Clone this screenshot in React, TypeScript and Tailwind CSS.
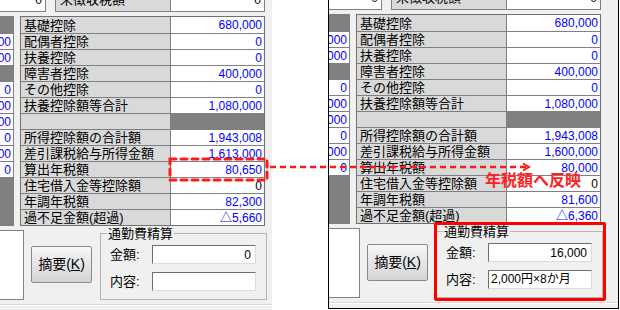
import React from "react";

type SheetData = {
  values: string[];
  amount: string;
  memo: string;
};

const LABELS = [
  "基礎控除",
  "配偶者控除",
  "扶養控除",
  "障害者控除",
  "その他控除",
  "扶養控除額等合計",
  "",
  "所得控除額の合計額",
  "差引課税給与所得金額",
  "算出年税額",
  "住宅借入金等控除額",
  "年調年税額",
  "過不足金額(超過)",
];

// left neighbour column, only its right edge is on screen
const SIDE = ["", "380,000", "380,000", "", "0", "1,030,000", "1,100,000", "0", "270,000", "0"];

const BEFORE: SheetData = {
  values: ["680,000", "0", "0", "400,000", "0", "1,080,000", "", "1,943,008", "1,613,000", "80,650", "0", "82,300", "△5,660"],
  amount: "0",
  memo: "",
};

const AFTER: SheetData = {
  values: ["680,000", "0", "0", "400,000", "0", "1,080,000", "", "1,943,008", "1,600,000", "80,000", "0", "81,600", "△6,360"],
  amount: "16,000",
  memo: "2,000円×8か月",
};

function Sheet({ data, className }: { data: SheetData; className: string }) {
  return (
    <div className={`w-[300px] text-black ${className}`}>
      {/* top row, mostly scrolled off */}
      <div className="flex h-[24px] text-[12px]">
        <div className="flex w-[53px] items-center justify-end border-r border-b border-[#808080] bg-white pr-[3px]">0</div>
        <div className="ml-[9px] flex w-[116px] items-center border border-[#808080] bg-[#d9d9d9] pl-[4px] text-[13px]">
          未徴収税額
        </div>
        <div className="flex w-[94px] items-center justify-end border-y border-r border-[#808080] bg-white pr-[3px]">0</div>
      </div>

      <div className="mt-[4px] flex items-start">
        <div className="w-[21px] border-y border-r border-[#808080] bg-white text-[12px] leading-none text-[#0000ff]">
          {SIDE.map((v, i) =>
            i === 0 || i === 3 ? (
              <div key={i} className="h-[16px] border-t border-[#808080] bg-[#808080] first:border-t-0" />
            ) : (
              <div key={i} className="flex h-[16px] items-center justify-end overflow-hidden border-t border-[#808080] pr-[2px] whitespace-nowrap">
                {v}
              </div>
            )
          )}
          <div className="h-[48px] border-t border-[#808080] bg-[#808080]" />
        </div>

        <div className="ml-[6px] w-[245px] border border-[#707070]">
          {LABELS.map((label, i) => (
            <div key={i} className="flex h-[16px] border-t border-[#808080] first:border-t-0">
              <div className="flex w-[150px] items-center border-r border-[#808080] bg-[#d9d9d9] pl-[3px] text-[13px] leading-none whitespace-nowrap">
                {label}
              </div>
              {i === 6 ? (
                <div className="flex-1 bg-[#808080]" />
              ) : (
                <div
                  className={`flex flex-1 items-center justify-end bg-white pr-[2px] text-[12px] leading-none ${
                    i === 10 ? "text-black" : "text-[#0000ff]"
                  }`}
                >
                  {data.values[i]}
                </div>
              )}
            </div>
          ))}
        </div>
      </div>

      <div className="flex items-start">
        <div className="mt-[4px] h-[70px] w-[31px] border-y border-r border-[#808080] bg-white" />
        <button className="ml-[7px] mt-[20px] flex h-[37px] w-[61px] items-center justify-center rounded-[2px] border border-[#8a8a8a] bg-gradient-to-b from-[#f7f7f7] to-[#d4d4d4] text-[14px] text-black">
          摘要(<span className="underline">K</span>)
        </button>
        <fieldset className="ml-[8px] w-[167px] border border-[#b4b4b4] pb-[8px] text-[13px]">
          <legend className="ml-[6px] px-[1px] leading-[15px]">通勤費精算</legend>
          <div className="mt-[4px] flex items-center pl-[9px]">
            <span className="w-[42px]">金額:</span>
            <div className="flex h-[19px] w-[104px] items-center justify-end border border-t-[#6e6e6e] border-l-[#6e6e6e] border-r-[#dcdcdc] border-b-[#dcdcdc] bg-white pr-[4px] text-[12px]">
              {data.amount}
            </div>
          </div>
          <div className="mt-[7px] flex items-center pl-[9px]">
            <span className="w-[42px]">内容:</span>
            <div className="flex h-[19px] w-[104px] items-center border border-t-[#6e6e6e] border-l-[#6e6e6e] border-r-[#dcdcdc] border-b-[#dcdcdc] bg-white pl-[2px] text-[12px] whitespace-nowrap">
              {data.memo}
            </div>
          </div>
        </fieldset>
      </div>

      <div className="mt-[4px] h-px bg-[#d8d8d8]" />
      <div className="h-px bg-white" />
    </div>
  );
}

export default function App() {
  return (
    <div className="relative flex h-[310px] w-[620px] overflow-hidden bg-white font-['Liberation_Sans','Noto_Sans_CJK_JP',sans-serif]">
      <div className="h-full w-[272px] overflow-hidden bg-[#f0f0f0]">
        <Sheet data={BEFORE} className="-ml-[7px] -mt-[12px]" />
      </div>
      <div className="ml-[56px] h-[309px] w-[291px] overflow-hidden border-x border-b border-black bg-[#f0f0f0]">
        <Sheet data={AFTER} className="-mt-[14px]" />
      </div>

      {/* annotations */}
      <svg className="pointer-events-none absolute inset-0" width="620" height="310">
        <rect x="170" y="159" width="97" height="21" fill="none" stroke="#ff1a1a" strokeWidth="3" strokeDasharray="6 5" strokeLinecap="round" />
        <line x1="270" y1="167" x2="526" y2="167" stroke="#ff1a1a" strokeWidth="2.5" strokeDasharray="6 4" />
        <polyline points="523,163.5 529,167 523,170.5" fill="none" stroke="#ff1a1a" strokeWidth="2" />
      </svg>
      <span className="absolute left-[485px] top-[171px] text-[16px] leading-none font-bold text-[#ff1f1f] font-['Noto_Sans_CJK_JP',sans-serif]">
        年税額へ反映
      </span>
      <div className="absolute left-[434px] top-[222px] h-[79px] w-[172px] rounded-[2px] border-[3px] border-[#ff0000]" />
    </div>
  );
}
